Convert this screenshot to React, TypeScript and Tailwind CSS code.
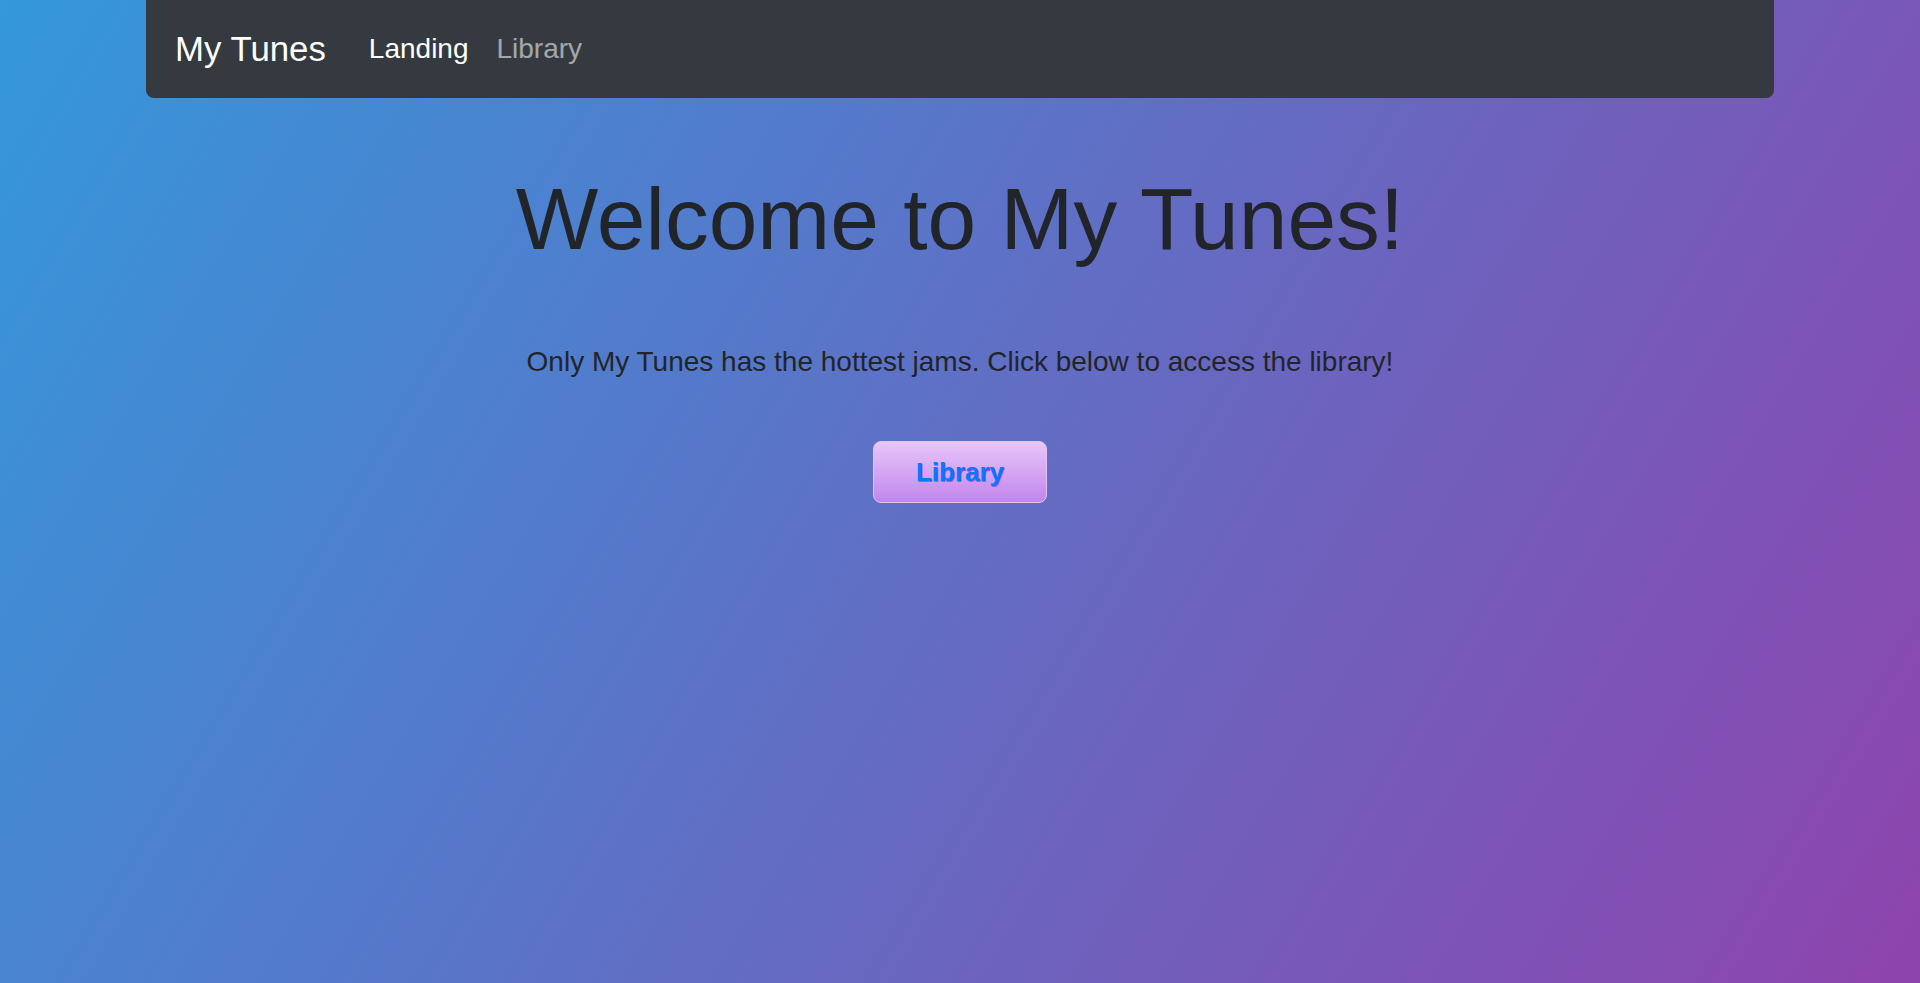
import React from 'react';

const NavBar: React.FC = () => {
  return (
    <nav className="mx-auto flex h-[98px] w-[1628px] items-center rounded-b-lg bg-[#343a40] pl-[29px]">
      <a href="#" className="text-[34.8px] leading-[1.5] text-white">My Tunes</a>
      <div className="ml-[43px] flex items-center gap-[28px]">
        <a href="#" className="text-[28px] leading-[1.5] text-white">Landing</a>
        <a href="#" className="text-[28px] leading-[1.5] text-white/55">Library</a>
      </div>
    </nav>
  );
};

const App: React.FC = () => {
  return (
    <div
      className="min-h-[983px] bg-[linear-gradient(121deg,#3498db,#8e44ad)] text-[#212529]"
      style={{ fontFamily: '"Liberation Sans", Arial, sans-serif' }}
    >
      <NavBar />
      <main className="flex flex-col items-center">
        <h1 className="mt-[69px] text-[87.5px] leading-[1.2] font-normal">Welcome to My Tunes!</h1>
        <p className="mt-[69px] text-[28px] leading-[1.5]">
          Only My Tunes has the hottest jams. Click below to access the library!
        </p>
        <button className="mt-[58px] flex h-[62px] w-[174px] items-center justify-center rounded-lg border border-[#e6c2f7] bg-gradient-to-b from-[#e7c6f9] to-[#c186ec] text-[26px] font-bold text-[#007bff] [text-shadow:1px_1px_0_#b04fd8]">
          Library
        </button>
      </main>
    </div>
  );
};

export default App;
